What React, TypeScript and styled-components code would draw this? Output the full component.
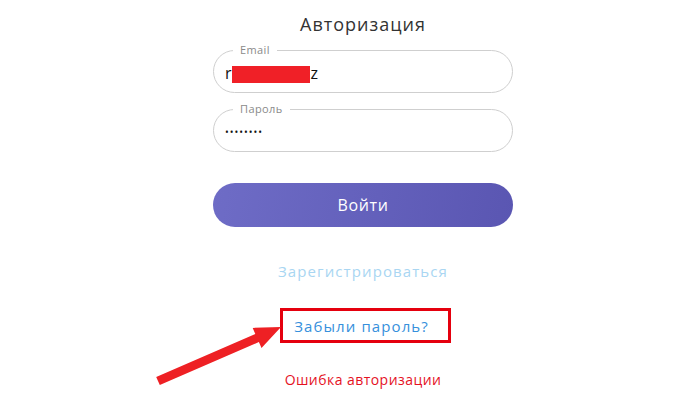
import React from "react";
import styled, { createGlobalStyle } from "styled-components";

const Global = createGlobalStyle`
  html, body { margin: 0; padding: 0; background: #fff; }
  body { font-family: "Open Sans", "Noto Sans", sans-serif; }
`;

const Page = styled.main`
  position: relative;
  width: 691px;
  height: 403px;
  overflow: hidden;
  display: flex;
  justify-content: center;
  padding-left: 35px;
  box-sizing: border-box;
`;

const Form = styled.section`
  width: 300px;
  display: flex;
  flex-direction: column;
  align-items: center;
`;

const Title = styled.h1`
  margin: 11px 0 0;
  font-size: 18px;
  font-weight: 400;
  letter-spacing: 1px;
  color: #333;
  line-height: 26px;
`;

const Field = styled.div<{ $top: number }>`
  position: relative;
  box-sizing: border-box;
  width: 300px;
  height: 43px;
  margin-top: ${(p) => p.$top}px;
  padding: 3px 0 0 11px;
  border: 1px solid #cfcfcf;
  border-radius: 22px;
  display: flex;
  align-items: center;
`;

const Label = styled.span`
  position: absolute;
  left: 19px;
  top: -8px;
  padding: 0 7px;
  background: #fff;
  font-size: 11px;
  line-height: 14px;
  letter-spacing: 0.4px;
  color: #8a8a8a;
`;

const Value = styled.div`
  font-size: 16px;
  color: #111;
  display: flex;
  align-items: center;
`;

const Redacted = styled.span`
  display: inline-block;
  width: 78px;
  height: 17px;
  background: #f02027;
  margin: 2px 1px 0 0;
`;

const Dots = styled.div`
  font-size: 10px;
  letter-spacing: 1px;
  color: #111;
`;

const Button = styled.button`
  margin-top: 31px;
  width: 300px;
  height: 44px;
  border: none;
  border-radius: 22px;
  background: linear-gradient(100deg, #6e6cc6 0%, #5a56b2 100%);
  color: #fff;
  font-family: inherit;
  font-size: 16px;
  letter-spacing: 0.6px;
`;

const Register = styled.a`
  margin-top: 34px;
  font-size: 15px;
  line-height: 20px;
  letter-spacing: 1.1px;
  color: #a9d6f2;
  text-decoration: none;
`;

const ForgotBox = styled.div`
  margin: 27px 0 0 5px;
  height: 35px;
  box-sizing: border-box;
  padding: 0 19px 0 11px;
  border: 3px solid #e5000e;
  display: flex;
  align-items: center;
`;

const Forgot = styled.a`
  font-size: 15px;
  letter-spacing: 1.1px;
  color: #3690dc;
  text-decoration: none;
`;

const ErrorText = styled.p`
  margin: 27px 0 0;
  font-size: 14px;
  line-height: 19px;
  letter-spacing: 0.45px;
  color: #e5121f;
`;

const Arrow = styled.svg`
  position: absolute;
  left: 0;
  top: 0;
`;

export default function App() {
  return (
    <>
      <Global />
      <Page>
        <Form>
          <Title>Авторизация</Title>
          <Field $top={13}>
            <Label>Email</Label>
            <Value>
              r<Redacted />z
            </Value>
          </Field>
          <Field $top={16}>
            <Label>Пароль</Label>
            <Dots>••••••••</Dots>
          </Field>
          <Button>Войти</Button>
          <Register>Зарегистрироваться</Register>
          <ForgotBox>
            <Forgot>Забыли пароль?</Forgot>
          </ForgotBox>
          <ErrorText>Ошибка авторизации</ErrorText>
        </Form>
        <Arrow width="691" height="403" viewBox="0 0 691 403">
          <polygon
            points="156.2,376.9 255.3,333.9 252.7,327.9 281,327 261.5,348.1 258.9,342.1 159.8,385.1"
            fill="#ee2024"
          />
        </Arrow>
      </Page>
    </>
  );
}
